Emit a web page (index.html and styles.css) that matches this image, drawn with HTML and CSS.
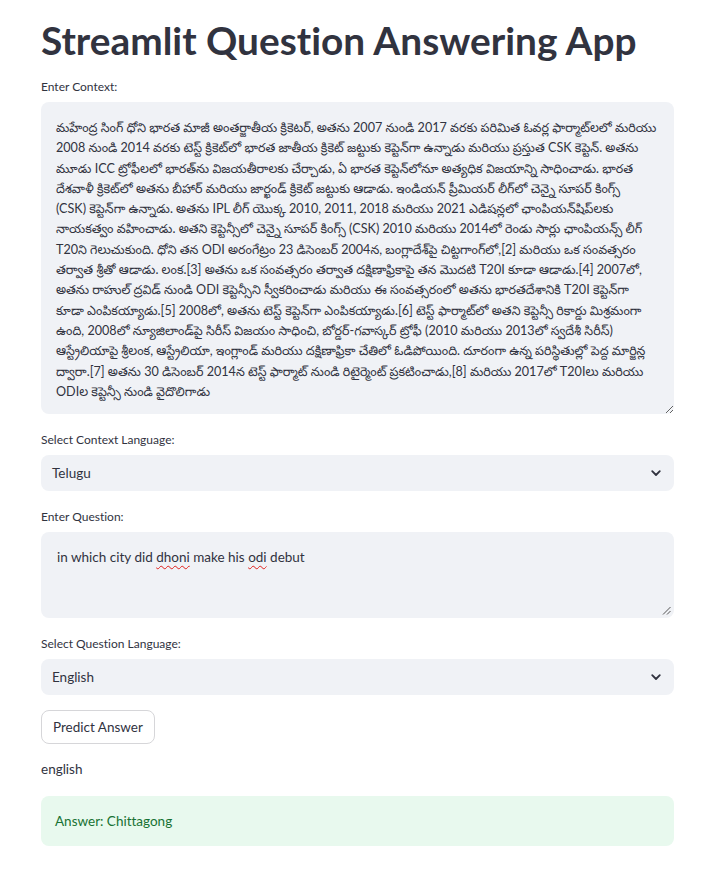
FILE: index.html
```html
<!DOCTYPE html>
<html lang="te">
<head>
<meta charset="utf-8">
<title>Streamlit Question Answering App</title>
<link rel="stylesheet" href="styles.css">
</head>
<body>
<main class="app">
  <h1 class="title">Streamlit Question Answering App</h1>

  <div class="field field-first">
    <label class="label" for="ctx">Enter Context:</label>
    <textarea id="ctx" class="textarea textarea-context" wrap="off" spellcheck="false">మహేంద్ర సింగ్ ధోని భారత మాజీ అంతర్జాతీయ క్రికెటర్, అతను 2007 నుండి 2017 వరకు పరిమిత ఓవర్ల ఫార్మాట్‌లలో మరియు
2008 నుండి 2014 వరకు టెస్ట్ క్రికెట్‌లో భారత జాతీయ క్రికెట్ జట్టుకు కెప్టెన్‌గా ఉన్నాడు మరియు ప్రస్తుత CSK కెప్టెన్. అతను
మూడు ICC ట్రోఫీలలో భారత్‌ను విజయతీరాలకు చేర్చాడు, ఏ భారత కెప్టెన్‌లోనూ అత్యధిక విజయాన్ని సాధించాడు. భారత
దేశవాళీ క్రికెట్‌లో అతను బీహార్ మరియు జార్ఖండ్ క్రికెట్ జట్టుకు ఆడాడు. ఇండియన్ ప్రీమియర్ లీగ్‌లో చెన్నై సూపర్ కింగ్స్
(CSK) కెప్టెన్‌గా ఉన్నాడు. అతను IPL లీగ్ యొక్క 2010, 2011, 2018 మరియు 2021 ఎడిషన్లలో ఛాంపియన్‌షిప్‌లకు
నాయకత్వం వహించాడు. అతని కెప్టెన్సీలో చెన్నై సూపర్ కింగ్స్ (CSK) 2010 మరియు 2014లో రెండు సార్లు ఛాంపియన్స్ లీగ్
T20ని గెలుచుకుంది. ధోని తన ODI అరంగేట్రం 23 డిసెంబర్ 2004న, బంగ్లాదేశ్‌పై చిట్టగాంగ్‌లో,[2] మరియు ఒక సంవత్సరం
తర్వాత శ్రీతో ఆడాడు. లంక.[3] అతను ఒక సంవత్సరం తర్వాత దక్షిణాఫ్రికాపై తన మొదటి T20I కూడా ఆడాడు.[4] 2007లో,
అతను రాహుల్ ద్రవిడ్ నుండి ODI కెప్టెన్సీని స్వీకరించాడు మరియు ఈ సంవత్సరంలో అతను భారతదేశానికి T20I కెప్టెన్‌గా
కూడా ఎంపికయ్యాడు.[5] 2008లో, అతను టెస్ట్ కెప్టెన్‌గా ఎంపికయ్యాడు.[6] టెస్ట్ ఫార్మాట్‌లో అతని కెప్టెన్సీ రికార్డు మిశ్రమంగా
ఉంది, 2008లో న్యూజిలాండ్‌పై సిరీస్ విజయం సాధించి, బోర్డర్-గవాస్కర్ ట్రోఫీ (2010 మరియు 2013లో స్వదేశీ సిరీస్)
ఆస్ట్రేలియాపై శ్రీలంక, ఆస్ట్రేలియా, ఇంగ్లాండ్ మరియు దక్షిణాఫ్రికా చేతిలో ఓడిపోయింది. దూరంగా ఉన్న పరిస్థితుల్లో పెద్ద మార్జిన్ల
ద్వారా.[7] అతను 30 డిసెంబర్ 2014న టెస్ట్ ఫార్మాట్ నుండి రిటైర్మెంట్ ప్రకటించాడు,[8] మరియు 2017లో T20Iలు మరియు
ODIల కెప్టెన్సీ నుండి వైదొలిగాడు</textarea>
  </div>

  <div class="field">
    <span class="label">Select Context Language:</span>
    <div class="select">
      <span class="select-value">Telugu</span>
      <svg class="chevron" width="12" height="12" viewBox="0 0 12 12" aria-hidden="true"><path d="M2.2 4.2 6 8 9.8 4.2" fill="none" stroke="#31333f" stroke-width="1.8" stroke-linecap="round" stroke-linejoin="round"/></svg>
    </div>
  </div>

  <div class="field">
    <span class="label">Enter Question:</span>
    <div class="textarea textarea-question" role="textbox">in which city did <span class="misspelled">dhoni</span> make his <span class="misspelled">odi</span> debut<svg class="grip" width="9" height="9" viewBox="0 0 9 9" aria-hidden="true"><path d="M8.5 1 1 8.5M8.5 5 5 8.5" stroke="#555" stroke-width="1" fill="none"/></svg></div>
  </div>

  <div class="field">
    <span class="label">Select Question Language:</span>
    <div class="select">
      <span class="select-value">English</span>
      <svg class="chevron" width="12" height="12" viewBox="0 0 12 12" aria-hidden="true"><path d="M2.2 4.2 6 8 9.8 4.2" fill="none" stroke="#31333f" stroke-width="1.8" stroke-linecap="round" stroke-linejoin="round"/></svg>
    </div>
  </div>

  <div class="actions">
    <button class="button" type="button">Predict Answer</button>
  </div>

  <p class="output">english</p>

  <div class="success">Answer: Chittagong</div>
</main>
</body>
</html>
```

FILE: styles.css
```css
* { box-sizing: border-box; }

html, body {
  margin: 0;
  padding: 0;
  background: #ffffff;
}

body {
  font-family: "Lato", "Noto Sans Telugu", "Liberation Sans", sans-serif;
  font-variant-ligatures: none;
  color: #31333f;
}

.app {
  width: 633px;
  margin-left: 41px;
  padding-top: 14px;
  display: flex;
  flex-direction: column;
}

.title {
  margin: 0;
  font-size: 38.8px;
  font-weight: 700;
  line-height: 52px;
  white-space: nowrap;
  font-variant-ligatures: none;
  color: #31333f;
}

.field {
  display: flex;
  flex-direction: column;
  margin-top: 18px;
}

.field-first {
  margin-top: 13px;
}

.label {
  font-size: 12px;
  line-height: 16px;
  margin-bottom: 7px;
  color: #31333f;
}

.textarea {
  width: 100%;
  background: #f0f2f6;
  border: none;
  border-radius: 8px;
  color: #31333f;
  font-family: "Lato", "Noto Sans Telugu", "Liberation Sans", sans-serif;
  font-size: 13.5px;
  line-height: 20.3px;
  outline: none;
}

.textarea-context {
  height: 312px;
  font-size: 12.6px;
  padding: 16px 14px 10px 15px;
  resize: vertical;
  overflow: hidden;
  white-space: pre;
  display: block;
}

.textarea-question {
  position: relative;
  height: 86px;
  line-height: 20px;
  padding: 15px 16px;
}

.misspelled {
  text-decoration: underline wavy #e0201c;
  text-decoration-thickness: 1px;
  text-underline-offset: 3px;
}

.grip {
  position: absolute;
  right: 3px;
  bottom: 3px;
}

.select {
  height: 36px;
  background: #f0f2f6;
  border-radius: 8px;
  display: flex;
  align-items: center;
  justify-content: space-between;
  padding: 0 12px 0 11px;
}

.select-value {
  font-size: 13.5px;
}

.chevron {
  display: block;
}

.actions {
  margin-top: 15px;
  display: flex;
}

.button {
  font-family: "Lato", "Liberation Sans", sans-serif;
  font-size: 13.5px;
  color: #31333f;
  background: #ffffff;
  border: 1px solid #d6d6d9;
  border-radius: 8px;
  height: 34px;
  padding: 0 11px;
  cursor: pointer;
}

.output {
  margin: 15px 0 0;
  font-size: 13.5px;
  line-height: 20px;
}

.success {
  margin-top: 17px;
  background: #e8f9ee;
  color: #177233;
  border-radius: 8px;
  height: 50px;
  display: flex;
  align-items: center;
  padding: 0 14px;
  font-size: 13.5px;
}
```
